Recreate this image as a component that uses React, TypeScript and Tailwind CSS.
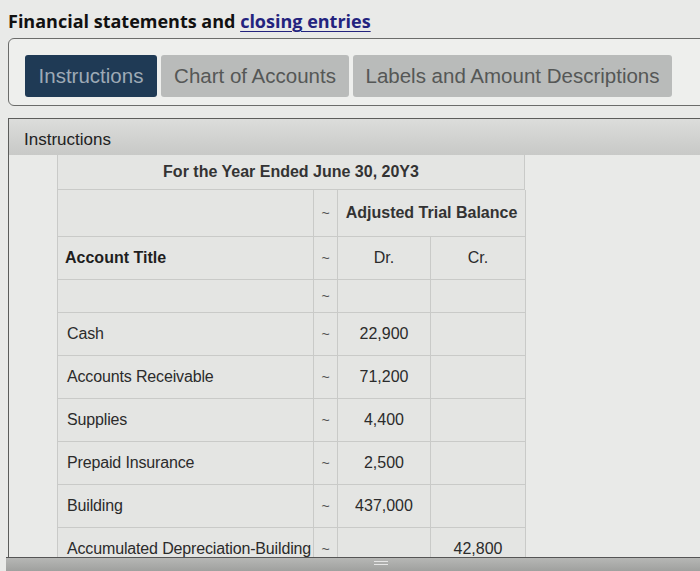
import React from 'react';

const rows: { title: string; dr?: string; cr?: string }[] = [
  { title: '' },
  { title: 'Cash', dr: '22,900' },
  { title: 'Accounts Receivable', dr: '71,200' },
  { title: 'Supplies', dr: '4,400' },
  { title: 'Prepaid Insurance', dr: '2,500' },
  { title: 'Building', dr: '437,000' },
  { title: 'Accumulated Depreciation-Building', cr: '42,800' },
];

const cell = 'border-r border-b border-[#c9cac8]';

function Tilde() {
  return <span className="text-[14px] text-[#505050]">~</span>;
}

export default function App() {
  return (
    <div className="relative h-[571px] w-[700px] overflow-hidden bg-[#e9eae8] font-['Liberation_Sans',Arial,sans-serif] text-[#2b2b2b]">
      {/* page title */}
      <div className="flex h-[38px] items-start px-2 pt-[7px] font-['Open_Sans',sans-serif] text-[18px] font-bold leading-[28px] text-[#111]">
        <span>Financial statements and&nbsp;</span>
        <span className="text-[#23237e] underline decoration-1 underline-offset-[3px]">closing entries</span>
      </div>

      {/* tab strip */}
      <div className="ml-2 flex h-[68px] w-[720px] items-start gap-1 rounded-[6px] border border-[#6b6c6a] bg-[#eeefed] pl-4 pt-4">
        <div className="flex h-[42px] w-[132px] items-center justify-center rounded-[3px] bg-[#1f3a55] text-[20.5px] text-[#9eaab6]">
          Instructions
        </div>
        <div className="flex h-[42px] w-[188px] items-center justify-center rounded-[3px] bg-[#b9bbba] text-[20.5px] text-[#555756]">
          Chart of Accounts
        </div>
        <div className="flex h-[42px] w-[319px] items-center justify-center rounded-[3px] bg-[#b9bbba] text-[20.5px] text-[#555756]">
          Labels and Amount Descriptions
        </div>
      </div>

      {/* instructions panel */}
      <div className="ml-2 mt-3 w-[720px] border-l border-t border-[#5c5d5b]">
        <div className="flex h-[36px] items-center bg-gradient-to-b from-[#dcdddb] to-[#c8c9c7] pl-[15px] pt-[6px] text-[17px] text-[#222]">
          Instructions
        </div>
        <div className="h-[402px] overflow-hidden pl-[48px]">
          <div className="w-[468px] border-l border-[#c9cac8] bg-[#e4e5e3]">
            <div className={`flex h-[35px] items-center justify-center ${cell} text-[16px] font-bold text-[#333]`}>
              For the Year Ended June 30, 20Y3
            </div>
            <div className="grid grid-cols-[256px_24px_188px]">
              <div className={`h-[47px] ${cell}`} />
              <div className={`flex items-center justify-center ${cell}`}>
                <Tilde />
              </div>
              <div className={`flex items-center justify-center ${cell} text-[16px] font-bold text-[#333]`}>
                Adjusted Trial Balance
              </div>
            </div>
            <div className="grid grid-cols-[256px_24px_93px_95px]">
              <div className={`flex h-[43px] items-center pl-[7px] ${cell} text-[16px] font-bold text-[#1e1e1e]`}>
                Account Title
              </div>
              <div className={`flex items-center justify-center ${cell}`}>
                <Tilde />
              </div>
              <div className={`flex items-center justify-center ${cell} text-[16px]`}>Dr.</div>
              <div className={`flex items-center justify-center ${cell} text-[16px]`}>Cr.</div>
              {rows.map((r, i) => (
                <React.Fragment key={i}>
                  <div
                    className={`flex items-center whitespace-nowrap pl-[9px] ${cell} text-[16px] tracking-[-0.15px] ${
                      i === 0 ? 'h-[33px]' : 'h-[43px]'
                    }`}
                  >
                    {r.title}
                  </div>
                  <div className={`flex items-center justify-center ${cell}`}>
                    <Tilde />
                  </div>
                  <div className={`flex items-center justify-center ${cell} text-[16px]`}>{r.dr}</div>
                  <div className={`flex items-center justify-center ${cell} text-[16px]`}>{r.cr}</div>
                </React.Fragment>
              ))}
            </div>
          </div>
        </div>
      </div>

      {/* bottom resize bar */}
      <div className="ml-[6px] flex h-[16px] w-[720px] justify-center border-t border-[#555] bg-gradient-to-b from-[#b6b7b5] to-[#9c9d9b] pr-[220px] pt-[3px]">
        <div className="flex flex-col gap-[2px] pl-[250px]">
          <span className="block h-[1px] w-[14px] bg-[#e6e6e6]" />
          <span className="block h-[1px] w-[14px] bg-[#e6e6e6]" />
        </div>
      </div>
    </div>
  );
}
